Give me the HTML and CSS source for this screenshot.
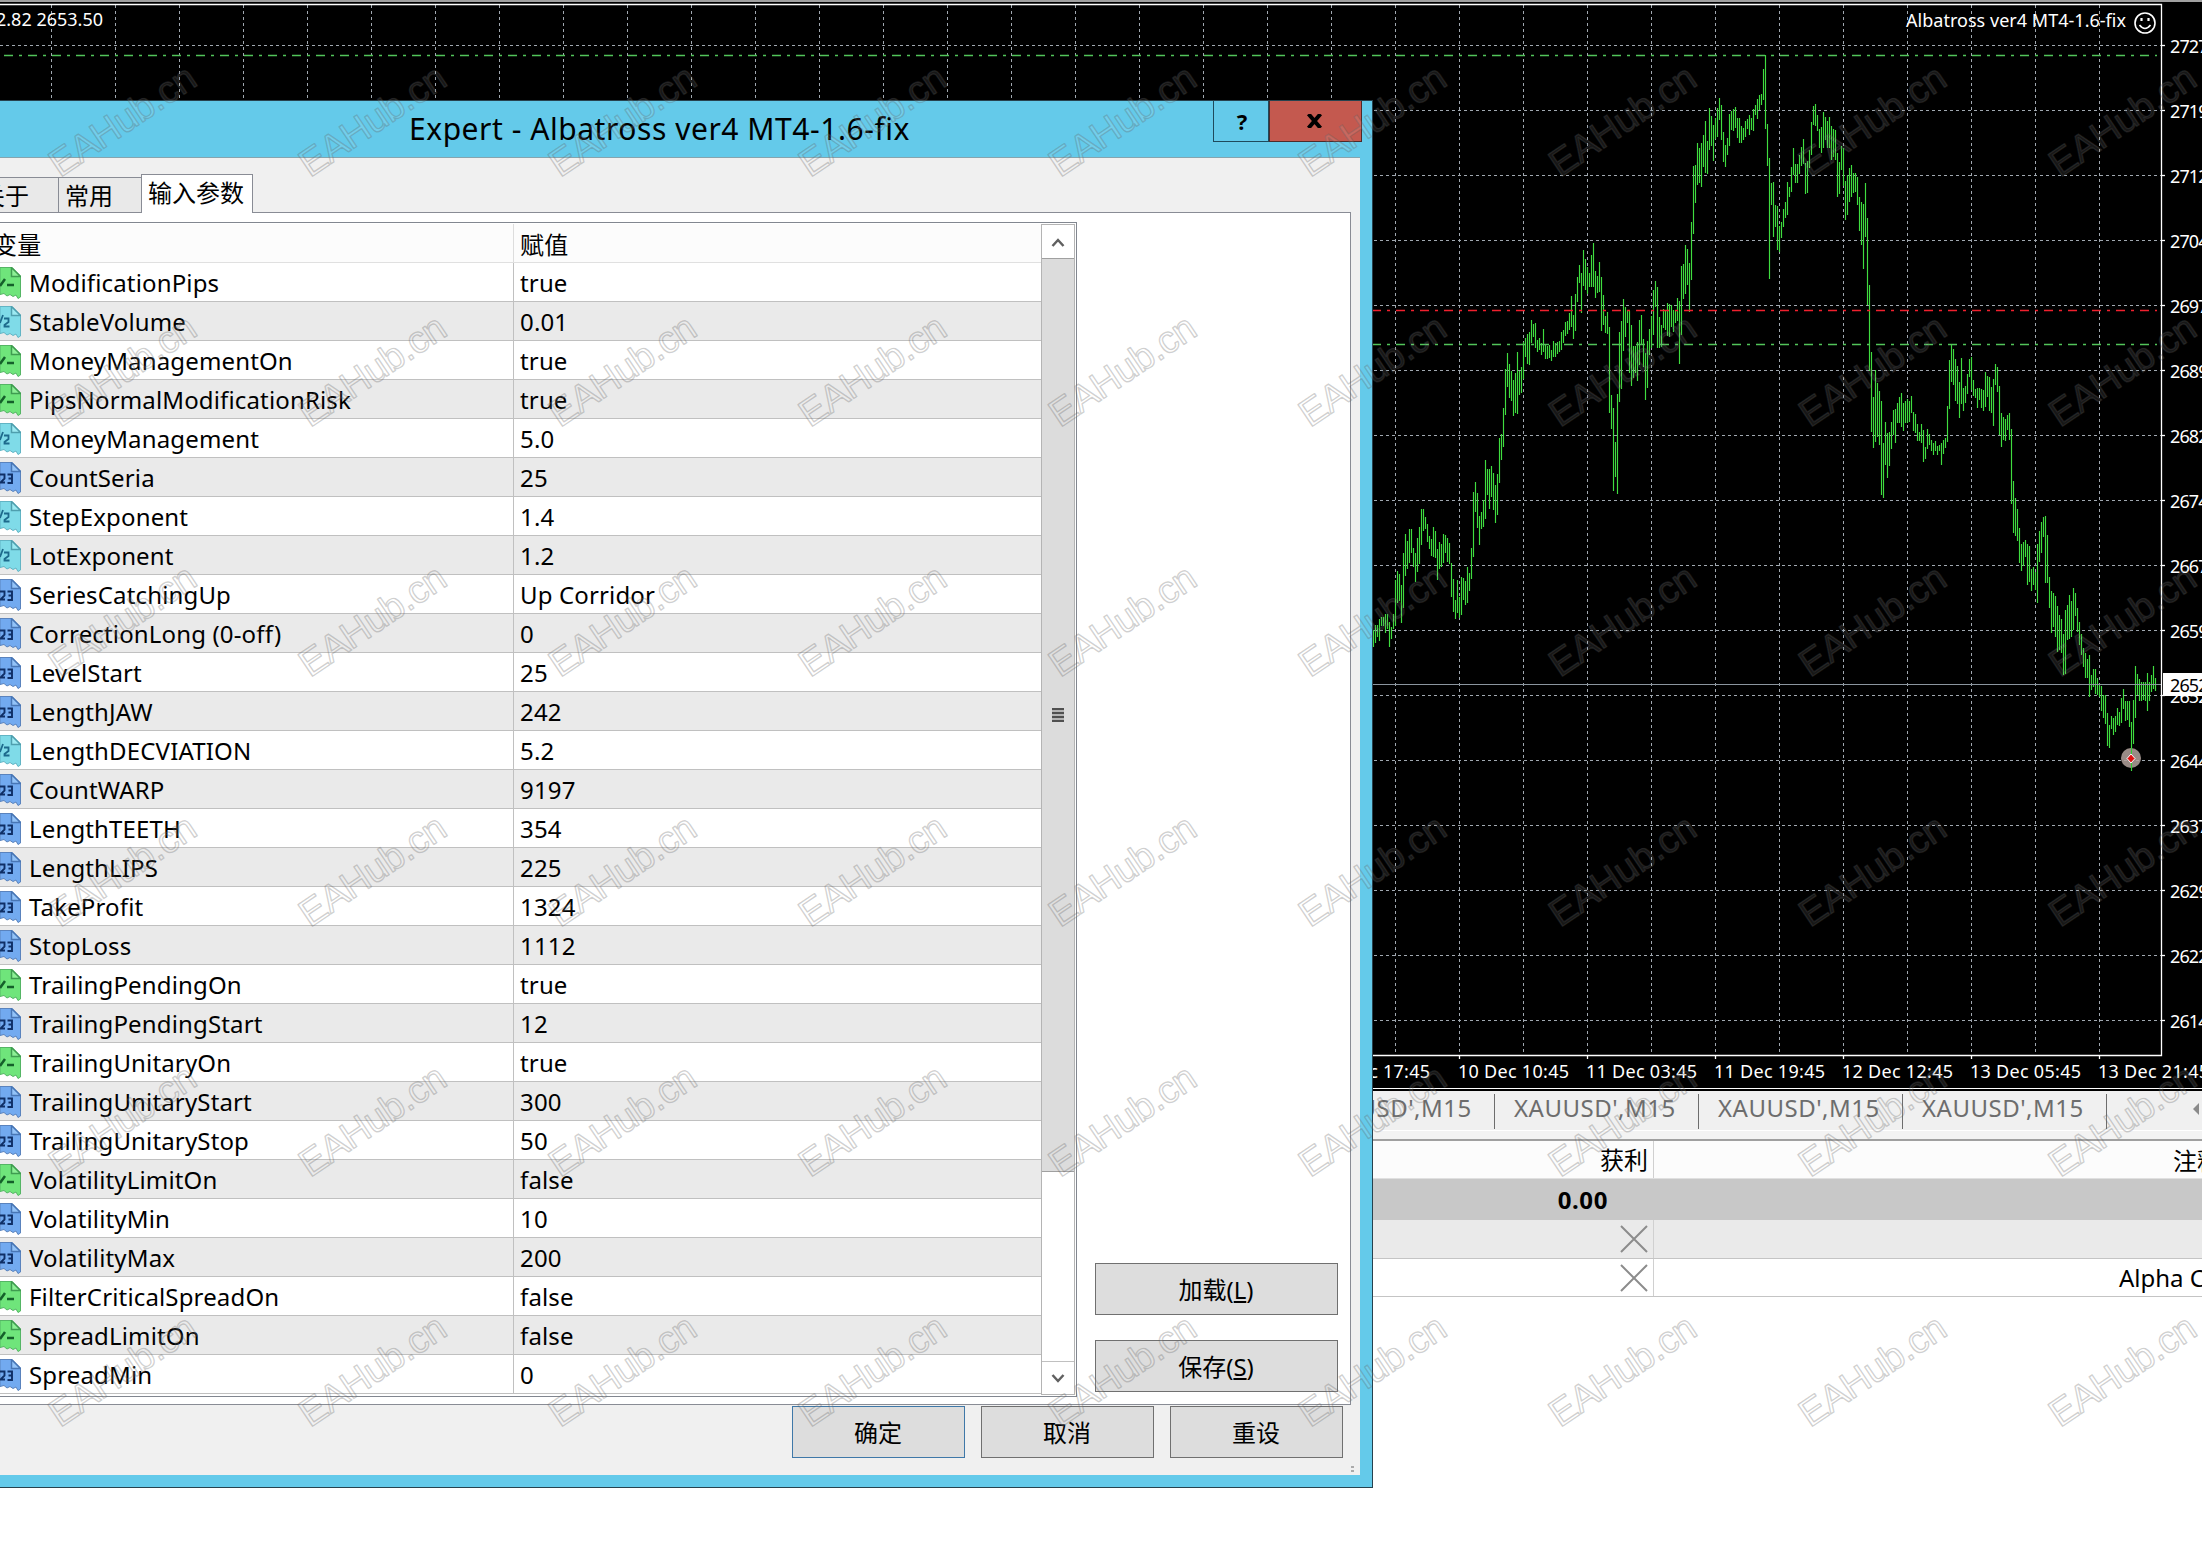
FILE: index.html
```html
<!DOCTYPE html>
<html lang="zh-CN">
  <head>
    <meta charset="utf-8">
    <title>Expert - Albatross ver4 MT4-1.6-fix</title>
    <link rel="stylesheet" href="styles.css">
  </head>
  <body>
    <svg class="defs">
      <symbol id="i-bool" viewBox="0 0 21 32">
        <path d="M0 .5H12L20.500 9V30L18 31.500 16 28 13 29.500 10 27.500 7 29 4 26.500 0 27.500Z" fill="#6fe57b" stroke="#55b565"/>
        <path d="M11.500 .5V9.500H20.500Z" fill="#8df096" stroke="#3f9c50" stroke-width="1.500"/>
        <path d="M0 19L5 12M7 18H14" fill="none" stroke="#14602a" stroke-width="2.500"/>
      </symbol>
      <symbol id="i-double" viewBox="0 0 21 32">
        <path d="M0 .5H12L20.500 9V30L18 31.500 16 28 13 29.500 10 27.500 7 29 4 26.500 0 27.500Z" fill="#7fdbe8" stroke="#62b4c4"/>
        <path d="M11.500 .5V9.500H20.500Z" fill="#9deaf2" stroke="#4f9fae" stroke-width="1.500"/>
        <path d="M0 17L3 9M4 12.500H8.500V16L4.500 19V20.500H9.500" fill="none" stroke="#1d6a8c" stroke-width="1.800"/>
      </symbol>
      <symbol id="i-int" viewBox="0 0 21 32">
        <path d="M0 .5H12L20.500 9V30L18 31.500 16 28 13 29.500 10 27.500 7 29 4 26.500 0 27.500Z" fill="#72aaf0" stroke="#5a83bd"/>
        <path d="M11.500 .5V9.500H20.500Z" fill="#93c3f8" stroke="#4876b5" stroke-width="1.500"/>
        <path d="M0 12.500H4.500V16.500L.5 20.500H5M7.500 12.500H12V21H7.500M8.500 16.500H12" fill="none" stroke="#0f2f66" stroke-width="1.900"/>
      </symbol>
    </svg>

    <div class="terminal">
      <svg class="chart" id="chart" width="2202" height="1088"></svg>

      <div class="chart-tabs">
        <span class="chart-tab">XAUUSD',M15</span>
        <span class="chart-tab">XAUUSD',M15</span>
        <span class="chart-tab">XAUUSD',M15</span>
        <span class="chart-tab">XAUUSD',M15</span>
        <svg class="tab-arrow" width="8" height="14"><path d="M7 1V13L1 7Z" fill="#8a8a8a"/></svg>
      </div>

      <div class="orders">
        <div class="order order-head"><span class="profit">获利</span><span class="comment">注释</span></div>
        <div class="order order-total"><span class="profit">0.00</span><span class="comment"></span></div>
        <div class="order order-alt">
          <span class="profit"><svg class="close" width="28" height="28"><path d="M1 1L27 27M27 1L1 27"/></svg></span>
          <span class="comment"></span>
        </div>
        <div class="order">
          <span class="profit"><svg class="close" width="28" height="28"><path d="M1 1L27 27M27 1L1 27"/></svg></span>
          <span class="comment alpha">Alpha C</span>
        </div>
      </div>
    </div>

    <div class="dialog">
      <div class="titlebar">
        <span class="title">Expert - Albatross ver4 MT4-1.6-fix</span>
        <div class="winbuttons">
          <div class="win-help">?</div>
          <div class="win-close"><svg width="17" height="14"><path d="M2.500 0L14.500 14M14.500 0L2.500 14" stroke="#000" stroke-width="4"/></svg></div>
        </div>
      </div>
      <div class="client">
        <div class="tabs">
          <div class="tab tab-about">关于</div>
          <div class="tab tab-common">常用</div>
          <div class="tab tab-active">输入参数</div>
        </div>
        <div class="panel">
          <div class="list">
            <div class="grid">
              <div class="row head"><span class="name">变量</span><span class="val">赋值</span></div>
              <div class="row"><svg class="icon"><use href="#i-bool"/></svg><span class="name">ModificationPips</span><span class="val">true</span></div>
              <div class="row"><svg class="icon"><use href="#i-double"/></svg><span class="name">StableVolume</span><span class="val">0.01</span></div>
              <div class="row"><svg class="icon"><use href="#i-bool"/></svg><span class="name">MoneyManagementOn</span><span class="val">true</span></div>
              <div class="row"><svg class="icon"><use href="#i-bool"/></svg><span class="name">PipsNormalModificationRisk</span><span class="val">true</span></div>
              <div class="row"><svg class="icon"><use href="#i-double"/></svg><span class="name">MoneyManagement</span><span class="val">5.0</span></div>
              <div class="row"><svg class="icon"><use href="#i-int"/></svg><span class="name">CountSeria</span><span class="val">25</span></div>
              <div class="row"><svg class="icon"><use href="#i-double"/></svg><span class="name">StepExponent</span><span class="val">1.4</span></div>
              <div class="row"><svg class="icon"><use href="#i-double"/></svg><span class="name">LotExponent</span><span class="val">1.2</span></div>
              <div class="row"><svg class="icon"><use href="#i-int"/></svg><span class="name">SeriesCatchingUp</span><span class="val">Up Corridor</span></div>
              <div class="row"><svg class="icon"><use href="#i-int"/></svg><span class="name">CorrectionLong (0-off)</span><span class="val">0</span></div>
              <div class="row"><svg class="icon"><use href="#i-int"/></svg><span class="name">LevelStart</span><span class="val">25</span></div>
              <div class="row"><svg class="icon"><use href="#i-int"/></svg><span class="name">LengthJAW</span><span class="val">242</span></div>
              <div class="row"><svg class="icon"><use href="#i-double"/></svg><span class="name">LengthDECVIATION</span><span class="val">5.2</span></div>
              <div class="row"><svg class="icon"><use href="#i-int"/></svg><span class="name">CountWARP</span><span class="val">9197</span></div>
              <div class="row"><svg class="icon"><use href="#i-int"/></svg><span class="name">LengthTEETH</span><span class="val">354</span></div>
              <div class="row"><svg class="icon"><use href="#i-int"/></svg><span class="name">LengthLIPS</span><span class="val">225</span></div>
              <div class="row"><svg class="icon"><use href="#i-int"/></svg><span class="name">TakeProfit</span><span class="val">1324</span></div>
              <div class="row"><svg class="icon"><use href="#i-int"/></svg><span class="name">StopLoss</span><span class="val">1112</span></div>
              <div class="row"><svg class="icon"><use href="#i-bool"/></svg><span class="name">TrailingPendingOn</span><span class="val">true</span></div>
              <div class="row"><svg class="icon"><use href="#i-int"/></svg><span class="name">TrailingPendingStart</span><span class="val">12</span></div>
              <div class="row"><svg class="icon"><use href="#i-bool"/></svg><span class="name">TrailingUnitaryOn</span><span class="val">true</span></div>
              <div class="row"><svg class="icon"><use href="#i-int"/></svg><span class="name">TrailingUnitaryStart</span><span class="val">300</span></div>
              <div class="row"><svg class="icon"><use href="#i-int"/></svg><span class="name">TrailingUnitaryStop</span><span class="val">50</span></div>
              <div class="row"><svg class="icon"><use href="#i-bool"/></svg><span class="name">VolatilityLimitOn</span><span class="val">false</span></div>
              <div class="row"><svg class="icon"><use href="#i-int"/></svg><span class="name">VolatilityMin</span><span class="val">10</span></div>
              <div class="row"><svg class="icon"><use href="#i-int"/></svg><span class="name">VolatilityMax</span><span class="val">200</span></div>
              <div class="row"><svg class="icon"><use href="#i-bool"/></svg><span class="name">FilterCriticalSpreadOn</span><span class="val">false</span></div>
              <div class="row"><svg class="icon"><use href="#i-bool"/></svg><span class="name">SpreadLimitOn</span><span class="val">false</span></div>
              <div class="row"><svg class="icon"><use href="#i-int"/></svg><span class="name">SpreadMin</span><span class="val">0</span></div>
            </div>
            <div class="scrollbar">
              <div class="scroll-up"><svg width="14" height="9"><path d="M1.500 8L7 2L12.500 8"/></svg></div>
              <div class="scroll-thumb"><div class="grip"></div></div>
              <div class="scroll-track"></div>
              <div class="scroll-down"><svg width="14" height="9"><path d="M1.500 1L7 7L12.500 1"/></svg></div>
            </div>
          </div>
          <div class="side">
            <button class="btn btn-side">加载(<u>L</u>)</button>
            <button class="btn btn-side">保存(<u>S</u>)</button>
          </div>
        </div>
        <div class="footer">
          <button class="btn btn-default">确定</button>
          <button class="btn">取消</button>
          <button class="btn">重设</button>
        </div>
        <div class="sizegrip"></div>
      </div>
    </div>

    <svg class="watermark" id="watermark" width="2202" height="1566"></svg>
    <script src="chart.js"></script>
  </body>
</html>
```
FILE: styles.css
```css
body {
margin: 0;
width: 2202px;
height: 1566px;
position: relative;
overflow: hidden;
background: #fff;
color: #000;
font-family: "Noto Sans", "Noto Sans CJK SC", sans-serif;
font-size: 24px;
}

svg {
display: block;
}

.defs {
position: absolute;
width: 0;
height: 0;
}

/* chart */
.chart {
background: #000;
}

.chart text {
font-size: 18px;
fill: #fff;
}

.chart .price {
letter-spacing: -0.9px;
}

.chart .price-now {
fill: #000;
}

.grid-line {
stroke: #a0a8b0;
stroke-dasharray: 3 3;
}

.frame {
fill: none;
stroke: #fff;
stroke-width: 1.3;
}

.bars {
stroke: #3fdc3f;
stroke-width: 1.15;
fill: none;
}

.level {
stroke-width: 1.3;
stroke-dasharray: 9 6 3 6;
}

.level-green {
stroke: #52c45a;
}

.level-red {
stroke: #f0202e;
}

/* chart tabs */
.chart-tabs {
box-sizing: border-box;
height: 53px;
padding: 5px 0 0 1291px;
display: flex;
background: #f0f0f0;
border-top: 1px solid #fff;
border-bottom: 2px solid #a0a0a0;
box-shadow: inset 0 2px 0 #000, inset 0 -8px 0 #f3f3f3, inset 0 -9px 0 #fff;
}

.chart-tab {
box-sizing: border-box;
width: 204px;
height: 35px;
padding-left: 19px;
border-right: 1px solid #6d6d6d;
color: #6d6d6d;
line-height: 28px;
white-space: nowrap;
letter-spacing: 0.5px;
}

.tab-arrow {
margin: 8px 0 0 85px;
}

/* orders */
.order {
box-sizing: border-box;
height: 38px;
display: flex;
line-height: 37px;
border-bottom: 1px solid #c4c4c4;
overflow: hidden;
}

.profit {
box-sizing: border-box;
width: 1654px;
flex-shrink: 0;
padding-right: 5px;
border-right: 1px solid #d0d0d0;
display: flex;
justify-content: flex-end;
align-items: center;
}

.comment {
flex: 1;
padding-left: 519px;
white-space: nowrap;
}

.alpha {
padding-left: 465px;
}

.order-head {
height: 38px;
line-height: 40px;
background: #fcfcfc;
border-bottom-color: #e0e0e0;
}

.order-total {
height: 41px;
line-height: 41px;
background: #c8c8c8;
border-bottom: 0;
font-weight: bold;
}

.order-total .profit {
padding-right: 45px;
border-right-color: #c8c8c8;
letter-spacing: 0.6px;
}

.order-alt {
height: 39px;
background: #eaeaea;
}

.close path {
stroke: #8c8c8c;
stroke-width: 2;
}

/* dialog window */
.dialog {
position: absolute;
left: 0;
top: 100px;
box-sizing: border-box;
width: 1373px;
height: 1388px;
background: #64caea;
border: 1px solid #27424e;
border-left: 0;
}

.titlebar {
height: 56px;
display: flex;
}

.title {
box-sizing: border-box;
width: 1213px;
padding-left: 409px;
font-size: 30px;
line-height: 55px;
white-space: nowrap;
letter-spacing: 0.54px;
}

.winbuttons {
display: flex;
height: 41px;
}

.win-help, .win-close {
box-sizing: border-box;
display: flex;
align-items: center;
justify-content: center;
border: 1px solid #1f4a5c;
border-top: 0;
}

.win-help {
width: 56px;
padding-left: 2px;
font-size: 22px;
font-weight: bold;
}

.win-close {
width: 93px;
padding-right: 3px;
background: #c4594f;
border-color: #4e2b2b;
}

.client {
box-sizing: border-box;
width: 1360px;
height: 1318px;
background: #f0f0f0;
border-top: 1px solid #86a4ae;
position: relative;
}

.tabs {
height: 54px;
display: flex;
align-items: flex-end;
}

.tab {
box-sizing: border-box;
height: 35px;
background: #e9e9e9;
border: 1px solid #898c95;
border-bottom: 0;
line-height: 36px;
white-space: nowrap;
}

.tab-about {
width: 59px;
border-left: 0;
text-indent: -19px;
}

.tab-common {
width: 82px;
padding-left: 6px;
border-left: 0;
border-right: 0;
}

.tab-active {
width: 112px;
height: 39px;
padding-left: 6px;
margin-bottom: -1px;
background: #fff;
z-index: 1;
}

.panel {
box-sizing: border-box;
width: 1351px;
height: 1193px;
display: flex;
background: #fff;
border: 1px solid #898c95;
border-left: 0;
padding-top: 9px;
}

.list {
box-sizing: border-box;
width: 1077px;
height: 1175px;
display: flex;
border: 1px solid #828790;
border-left: 0;
padding: 1px 1px 1px 0;
}

.grid {
width: 1041px;
}

.row {
box-sizing: border-box;
height: 39px;
display: flex;
border-bottom: 1px solid #c0c0c0;
line-height: 40px;
white-space: nowrap;
letter-spacing: 0.15px;
}

.row:nth-child(odd) {
background: #eaeaea;
}

.row.head {
background: #fcfcfc;
border-bottom-color: #e0e0e0;
}

.icon {
width: 21px;
height: 32px;
margin: 4px 8px 0 0;
}

.name {
box-sizing: border-box;
width: 485px;
height: 38px;
border-right: 1px solid #c0c0c0;
}

.head .name {
width: 514px;
text-indent: -7px;
border-right-color: #ddd;
line-height: 42px;
}

.val {
padding-left: 6px;
}

.head .val {
line-height: 42px;
}

.scrollbar {
box-sizing: border-box;
width: 34px;
display: flex;
flex-direction: column;
border: 1px solid #b4b4b4;
}

.scroll-up, .scroll-down {
height: 33px;
display: flex;
align-items: center;
justify-content: center;
padding-top: 1px;
box-sizing: border-box;
}

.scroll-up path, .scroll-down path {
fill: none;
stroke: #606060;
stroke-width: 2.5;
}

.scroll-thumb {
box-sizing: border-box;
height: 914px;
display: flex;
align-items: center;
justify-content: center;
background: #dcdcdc;
border-top: 1px solid #a0a0a0;
border-bottom: 1px solid #a0a0a0;
}

.grip {
width: 12px;
height: 14px;
background: repeating-linear-gradient(#505050 0 2px, #b4b4b4 2px 4px);
}

.scroll-track {
flex: 1;
}

.scroll-down {
border-top: 1px solid #c0c0c0;
}

.side {
margin: 1041px 0 0 18px;
display: flex;
flex-direction: column;
gap: 25px;
}

.btn {
box-sizing: border-box;
width: 173px;
height: 52px;
padding: 0 1px 2px 0;
background: #ddd;
border: 1px solid #707070;
font: inherit;
color: #000;
}

.btn-side {
width: 243px;
}

.btn-default {
border-color: #3f78a8;
}

.footer {
display: flex;
gap: 16px;
padding: 1px 0 0 792px;
}

.sizegrip {
position: absolute;
right: 6px;
bottom: 3px;
width: 3px;
height: 6px;
background: repeating-linear-gradient(#aaa 0 2px, #f0f0f0 2px 4px);
}

/* tiled mark across the whole page */
.watermark {
position: absolute;
left: 0;
top: 0;
}

.watermark text {
font-family: "Liberation Sans", sans-serif;
font-size: 38px;
fill: rgba(255, 255, 255, 0.1);
stroke: rgba(90, 90, 90, 0.28);
stroke-width: 1.4;
stroke-linejoin: round;
}
```
FILE: chart.js
```js
const NS = 'http://www.w3.org/2000/svg';
const chart = document.getElementById('chart');
const mark = document.getElementById('watermark');

// high-low of every bar in chart pixels, one bar each 2px
const bars = `
630-647 625-643 625-637 619-641 617-626 617-626 614-633 614-629 622-647 627-639 614-629 580-626 571-603 574-601
585-623 553-608 534-576 541-569 529-563 529-553 548-567 553-582 538-572 527-564 509-545 509-531 517-529 524-542
536-549 539-556 527-557 531-558 549-580 542-569 544-567 534-563 535-553 538-562 543-564 563-597 579-612 600-619
580-613 597-618 577-615 578-600 581-605 567-603 573-591 548-579 492-557 482-512 493-528 516-545 512-529 500-527
460-519 469-495 469-509 466-497 473-510 485-523 474-515 438-483 434-460 408-447
369-415 353-387 364-398 371-401 380-416 373-413 352-414 371-395 367-393 342-379 338-357 334-364 332-365 320-343
324-337 323-348 340-352 338-350 343-355 329-352 345-359 346-359 345-358 350-361 341-357 343-357 342-354 341-352
332-350 330-343 322-336 321-334 313-330 296-327 315-339 294-331 277-302 265-283 273-313 250-286 259-290 267-294
273-287 255-287 243-287 271-298 276-293 262-292 277-331 295-325 316-333 312-334 327-413 395-429 408-491 442-477
394-494 332-402 321-389 299-351 307-337 310-323 311-373 325-386 346-378 346-373 342-381 320-365 315-345 339-367
353-400 341-388 329-355 316-348 290-335 281-307 287-348 317-348 325-347 309-328 311-330 303-336 304-337 305-327
310-332 310-323 298-321 301-364 266-335 264-299 245-294 249-285 263-312 222-280
166-234 165-203 143-185 148-183 143-187 135-167 121-173 141-174 108-150 116-146 125-161 118-139 108-137 98-120
105-140 132-162 145-167 138-155 114-146 111-130 109-131 107-128 118-138 118-143 126-143 128-140 121-137 119-129
115-135 118-130 109-131 105-115 99-119 95-110 94-105 69-100 55-129 124-166 158-279 183-205 182-237 205-227
206-250 226-252 222-238 209-227 202-218 182-215 187-197 167-192 148-175 164-183 164-183 155-174 147-166 139-164
163-194 161-193 150-168 122-155 106-125 104-126 115-131 129-148 127-153 112-148 117-140 121-148 117-148 126-160
129-157 130-160 153-197 162-194 146-170 148-186 181-220 175-215 168-202 165-197 173-193 173-192 177-205 197-231
202-245 204-269 183-237 218-305 285-371 352-432
397-448 370-442 383-437 391-445 401-495 443-498 422-465 433-478 432-466 422-449 410-435 409-443 403-423 397-423
393-427 403-431 401-423 399-423 401-422 396-413 412-431 414-433 424-441 432-441 424-443 430-462 447-459 429-449
434-445 440-451 443-455 441-451 446-455 445-451 443-465 440-454 438-448 406-442 360-409 345-382 349-385 359-401
366-404 382-418 358-404 388-411 386-403 374-394 359-377 357-390 380-396 389-398 388-408 388-400 389-408 390-411
372-407 376-397 377-411 387-413 379-426 364-385 367-392 386-435 413-447 417-440 419-441 415-430 413-440 429-504
481-533 498-536 509-541 528-563 544-571 542-566 540-557 544-585 546-582 569-591 567-585 572-590 544-603 531-562
522-553 517-537 516-583 535-583 577-608 591-633 593-627 596-637 606-652 615-650 619-653 634-675 610-674 605-640
595-639 601-637 588-630 593-616 608-632 622-645 634-655 648-667 653-678 659-678 655-697 675-690 669-687 669-694
678-695 684-697 686-711 695-718 695-724 713-746 725-748 716-729 718-735 716-732 708-725 712-726 698-723 689-709
701-721 701-720 701-727 722-771 700-744 666-718 674-695 679-701 682-701 682-700 682-701 673-711 682-701 675-692
666-689 678-691`.trim().split(/\s+/);

const prices = ['2727', '2719', '2712', '2704', '2697', '2689', '2682', '2674', '2667', '2659', '2652', '2644', '2637', '2629', '2622', '2614'];
const times = ['9 Dec 17:45', '10 Dec 10:45', '11 Dec 03:45', '11 Dec 19:45', '12 Dec 12:45', '13 Dec 05:45', '13 Dec 21:45'];

function add(parent, name, attrs, text) {
  const el = document.createElementNS(NS, name);
  for (const key in attrs) el.setAttribute(key, attrs[key]);
  if (text) el.textContent = text;
  parent.appendChild(el);
  return el;
}

function line(cls, x1, y1, x2, y2) {
  return add(chart, 'path', { class: cls, d: `M${x1} ${y1}L${x2} ${y2}` });
}

// window edge above the chart
add(chart, 'rect', { x: 0, y: 0, width: 2202, height: 2, fill: '#a0a0a0' });

// grid
for (let x = 51.5; x < 2161; x += 64) line('grid-line', x, 5, x, 1055);
for (let y = 45.5; y < 1055; y += 65) line('grid-line', 0, y, 2161, y);

// bars
add(chart, 'path', {
  class: 'bars',
  d: bars.map((bar, i) => {
    const [high, low] = bar.split('-');
    return `M${1373.5 + i * 2} ${high}V${low}`;
  }).join('')
});

// levels
line('level level-green', 4, 55.5, 2157, 55.5);
line('level level-red', 4, 310.5, 2157, 310.5);
line('level level-green', 4, 344.5, 2157, 344.5);
add(chart, 'path', { d: 'M0 684.5H2161', stroke: '#8b959e' });

// order mark
add(chart, 'circle', { cx: 2131, cy: 758, r: 10, fill: '#b3a39d', 'fill-opacity': 0.85 });
add(chart, 'path', { d: 'M2131.500 748V770', stroke: '#32cd32' });
add(chart, 'path', { d: 'M2131 754L2135 758.500L2131 763L2127 758.500Z', fill: '#e01010', stroke: '#fff', 'stroke-width': 1 });

// frame and axes
add(chart, 'path', { class: 'frame', d: 'M0 4.500H2161.500V1055.500H0' });
prices.forEach((price, i) => {
  const y = 45.5 + i * 65;
  add(chart, 'path', { class: 'frame', d: `M2162 ${y}h3` });
  add(chart, 'text', { class: 'price', x: 2170, y: y + 7 }, price);
});
add(chart, 'rect', { x: 2163, y: 673, width: 39, height: 23, fill: '#fff' });
add(chart, 'text', { class: 'price price-now', x: 2170, y: 691.5 }, '2652');
times.forEach((time, i) => {
  const x = 1331 + i * 128;
  add(chart, 'path', { class: 'frame', d: `M${x + 0.5} 1056v3` });
  add(chart, 'text', { x: x - 1, y: 1078, textLength: i ? 111 : 100 }, time);
});

// captions
add(chart, 'text', { x: 103, y: 26, 'text-anchor': 'end' }, '2.82 2653.50');
add(chart, 'text', { x: 1906, y: 27, textLength: 220 }, 'Albatross ver4 MT4-1.6-fix');
const smile = add(chart, 'g', { fill: 'none', stroke: '#fff', 'stroke-width': 1.6 });
add(smile, 'circle', { cx: 2145, cy: 23, r: 10 });
add(smile, 'path', { d: 'M2139.500 25Q2145 32 2150.500 25' });
add(smile, 'path', { d: 'M2141.500 18v3M2148.500 18v3', 'stroke-width': 2.2 });

for (let y = 178; y < 1566; y += 250) {
  for (let x = 60; x < 2202; x += 250) {
    add(mark, 'text', { transform: `translate(${x} ${y}) rotate(-34)`, textLength: 168 }, 'EAHub.cn');
  }
}
```
